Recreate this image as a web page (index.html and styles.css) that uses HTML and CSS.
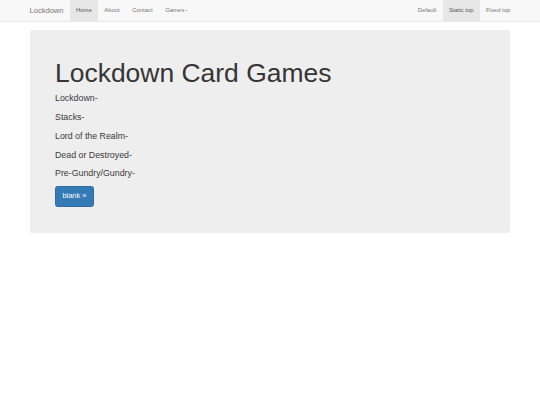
FILE: index.html
```html
<!DOCTYPE html>
<html lang="en">
<head>
<meta charset="utf-8">
<title>Lockdown Card Games</title>
<link rel="stylesheet" href="styles.css">
</head>
<body>
<nav class="navbar">
  <div class="navbar-inner">
    <a class="brand" href="#">Lockdown</a>
    <ul class="nav">
      <li class="active"><a href="#">Home</a></li>
      <li><a href="#">About</a></li>
      <li><a href="#">Contact</a></li>
      <li><a href="#">Games<span class="caret"></span></a></li>
    </ul>
    <ul class="nav nav-right">
      <li><a href="#">Default</a></li>
      <li class="active"><a href="#">Static top</a></li>
      <li><a href="#">Fixed top</a></li>
    </ul>
  </div>
</nav>
<div class="container">
  <div class="jumbotron">
    <h1>Lockdown Card Games</h1>
    <p>Lockdown-</p>
    <p>Stacks-</p>
    <p>Lord of the Realm-</p>
    <p>Dead or Destroyed-</p>
    <p>Pre-Gundry/Gundry-</p>
    <p><a class="btn" href="#">blank &raquo;</a></p>
  </div>
</div>
</body>
</html>
```
FILE: styles.css
```css
* { box-sizing: border-box; }
html, body { margin: 0; padding: 0; }
body {
  font-family: "Liberation Sans", Arial, "Helvetica Neue", sans-serif;
  font-size: 5.88px;
  line-height: 1.42857;
  color: #333;
  background: #fff;
}
a { text-decoration: none; }

.navbar {
  background: #f8f8f8;
  border-bottom: 1px solid #e7e7e7;
  margin-bottom: 8px;
}
.navbar-inner {
  width: 493px;
  margin: 0 auto;
  display: flex;
  align-items: stretch;
  height: 21px;
}
.brand {
  padding: 0 6.3px 0 6px;
  font-size: 7.56px;
  line-height: 21px;
  color: #777;
}
.nav {
  list-style: none;
  margin: 0;
  padding: 0;
  display: flex;
}
.nav-right { margin-left: auto; }
.nav a {
  display: block;
  padding: 0 6.3px;
  line-height: 21px;
  color: #777;
}
.nav .active a {
  background: #e7e7e7;
  color: #555;
}
.caret {
  display: inline-block;
  width: 0;
  height: 0;
  margin-left: 0.84px;
  vertical-align: middle;
  border-top: 1.68px solid #777;
  border-left: 1.68px solid transparent;
  border-right: 1.68px solid transparent;
}

.container {
  width: 493px;
  margin: 0 auto;
  padding: 0 6.5px;
}
.jumbotron {
  background: #eee;
  border-radius: 2.52px;
  padding: 20.16px 25px;
  margin-bottom: 12.6px;
}
.jumbotron h1 {
  font-size: 26.46px;
  line-height: 1.1;
  font-weight: 500;
  margin: 8.4px 0 4.2px;
  color: #353535;
}
.jumbotron p {
  font-size: 8.82px;
  line-height: 12.6px;
  margin: 0 0 6.3px;
  color: #3a3a3a;
}
.btn {
  display: inline-block;
  padding: 4.2px 6.5px;
  font-size: 7.4px;
  line-height: 1.3333;
  border: 0.5px solid #2e6da4;
  border-radius: 2.52px;
  background: #337ab7;
  color: #fff;
  vertical-align: middle;
}
```
